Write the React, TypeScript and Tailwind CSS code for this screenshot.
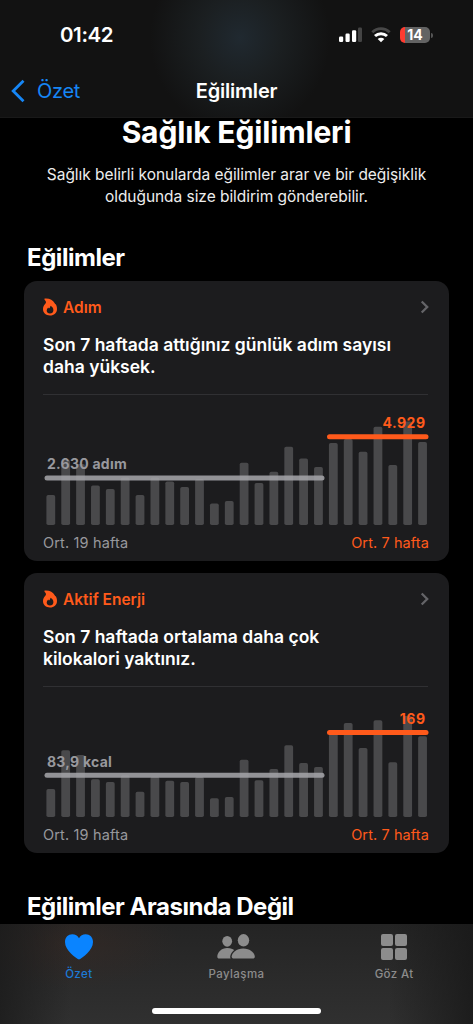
interface Trend {
  title: string;
  lines: string[];
  baseLabel: string;
  baseY: number;
  recentLabel: string;
  recentY: number;
  bars: number[];
}

const trends: Trend[] = [
  {
    title: "Adım",
    lines: ["Son 7 haftada attığınız günlük adım sayısı", "daha yüksek."],
    baseLabel: "2.630 adım",
    baseY: 83,
    recentLabel: "4.929",
    recentY: 41.7,
    bars: [
      30, 65, 61, 39.5, 36, 47.5, 30, 47.5, 43.5, 38, 46, 21.5, 24, 62.3, 42, 53.3, 78.3, 66.5, 58,
      82, 86, 73.3, 98.3, 60, 103.5, 83,
    ],
  },
  {
    title: "Aktif Enerji",
    lines: ["Son 7 haftada ortalama daha çok", "kilokalori yaktınız."],
    baseLabel: "83,9 kcal",
    baseY: 88.2,
    recentLabel: "169",
    recentY: 45.4,
    bars: [
      28, 66.7, 62, 37.7, 35, 41.7, 25.3, 40.3, 36.3, 35, 40, 18.7, 20, 57.3, 36.7, 48, 71.7, 54, 50,
      83.3, 94, 69, 96.7, 54.7, 101, 80.7,
    ],
  },
];

function FlameIcon() {
  return (
    <svg width="14" height="18" viewBox="0 0 14 18" className="shrink-0">
      <path
        fillRule="evenodd"
        fill="#ff5a1b"
        d="M2.2.5C6.4.2 10 1.9 11.7 5.2C12.2 6.2 12.4 6.5 12.6 6.1C13.5 7.5 14 9.3 14 11C14 15 11 17.5 7 17.5S0 15 0 11.3C0 9.2.7 7.6 1.9 6.2C2.5 5.5 3 4.9 3 4.2C3 3.3 2 2.5 1.5 1.6C1.2 1.1 1.5.5 2.2.5ZM7.3 7.8C7.6 9 6.8 9.9 6 10.4C5.6 10.1 5.4 9.8 5.2 9.5C4.2 10.4 3.7 11.4 3.7 12.5C3.7 14.3 5.1 15.5 7 15.5S10.4 14.2 10.4 12.2C10.4 10.2 9.3 8.4 7.3 7.8Z"
      />
    </svg>
  );
}

function TrendChart({ trend }: { trend: Trend }) {
  return (
    <svg width="387" height="130" viewBox="0 0 387 130" className="block">
      {trend.bars.map((height, index) => (
        <rect
          key={index}
          x={3.4 + index * 14.87}
          y={130 - height}
          width="8.8"
          height={height}
          rx="1.8"
          fill="#49494b"
        />
      ))}
      <line x1="4" x2="279" y1={trend.baseY} y2={trend.baseY} stroke="#a5a5aa" strokeOpacity="0.86" strokeWidth="5" strokeLinecap="round" />
      <line x1="286.5" x2="383" y1={trend.recentY} y2={trend.recentY} stroke="#ff5a1b" strokeWidth="5" strokeLinecap="round" />
      <text x="4" y={trend.baseY - 8.7} fill="#98989d" className="text-[14px] font-bold tracking-[0.25px]">
        {trend.baseLabel}
      </text>
      <text x="382.5" y={trend.recentY - 8.5} fill="#ff5a1b" textAnchor="end" className="text-[14px] font-bold tracking-[0.5px]">
        {trend.recentLabel}
      </text>
    </svg>
  );
}

function TrendCard({ trend }: { trend: Trend }) {
  return (
    <article className="h-[280px] rounded-[13px] bg-[#1c1c1e] px-[19px] pt-[15px]">
      <div className="flex h-[22px] items-center">
        <FlameIcon />
        <h3 className="mt-px ml-1.5 text-[15.5px] font-semibold text-[#ff5a1b]">{trend.title}</h3>
        <svg width="9" height="14" viewBox="0 0 9 14" fill="none" className="mr-px mb-px ml-auto">
          <path d="M1.7 1.5L7.2 7L1.7 12.5" stroke="#646468" strokeWidth="2.3" />
        </svg>
      </div>
      <p className="mt-4 text-[17.5px] leading-[22px] font-semibold whitespace-nowrap text-white">
        {trend.lines[0]}
        <br />
        {trend.lines[1]}
      </p>
      <div className="mt-4 h-px w-[385px] bg-[#303033]" />
      <TrendChart trend={trend} />
      <div className="mt-2 flex justify-between pr-px text-[14.5px] leading-5">
        <span className="tracking-[0.15px] text-[#98989d]">Ort. 19 hafta</span>
        <span className="tracking-[0.1px] text-[#ff5a1b]">Ort. 7 hafta</span>
      </div>
    </article>
  );
}

function StatusIcons() {
  return (
    <div className="flex items-center">
      {/* Signal */}
      <svg width="24" height="16" viewBox="0 0 24 16">
        <rect x="1" y="9.5" width="4.2" height="5.5" rx="1.2" fill="#fff" />
        <rect x="7.5" y="6.5" width="4.2" height="8.5" rx="1.2" fill="#fff" />
        <rect x="14" y="3.3" width="4.2" height="11.7" rx="1.2" fill="#fff" />
        <rect x="20" y="0.5" width="4" height="14.5" rx="1.2" fill="#444" />
      </svg>
      {/* Wi-Fi */}
      <svg width="20" height="16" viewBox="0 0 20 16" className="ml-[9px]" fill="none">
        <path d="M1.3 5.2C6.3.4 13.7.4 18.7 5.2" stroke="#484848" strokeWidth="2.8" />
        <path d="M4 9C7.4 5.9 12.6 5.9 16 9" stroke="#fff" strokeWidth="3" />
        <path d="M6.7 12C8.6 10.3 11.4 10.3 13.3 12L10 15.2Z" fill="#fff" />
      </svg>
      {/* Battery */}
      <div className="ml-[9px] flex h-4 w-[30px] items-center justify-center rounded-[5px] bg-linear-to-r from-[#ff3b30] from-[17%] to-[#636363] to-[17%] text-[14px] leading-none font-bold text-white">
        14
      </div>
      <div className="ml-px h-[5px] w-[2px] rounded-r-full bg-[#555]" />
    </div>
  );
}

function PeopleIcon() {
  return (
    <svg width="38" height="26" viewBox="0 0 38 26" fill="#8c8c8c">
      <ellipse cx="10.2" cy="7.3" rx="4.9" ry="5.4" />
      <path d="M15.3 14.9C13.8 14.2 12 13.9 10.2 13.9C4.5 13.9.3 18.3.3 22.5C.3 23.9 1 24.6 2.2 24.6H13.6C13.3 23.8 13.1 23.2 13.2 22.4C13.5 20 15 17.6 17.2 15.9Z" />
      <ellipse cx="26.5" cy="6.3" rx="5.7" ry="6.2" />
      <path d="M26.2 14.4C19.5 14.4 14.7 18.8 14.7 22.5C14.7 24 15.5 24.6 16.8 24.6H35.7C37.1 24.6 37.8 24 37.8 22.5C37.8 18.8 33 14.4 26.2 14.4Z" />
    </svg>
  );
}

export default function App() {
  return (
    <div className="flex h-[1024px] w-[473px] flex-col overflow-hidden bg-black font-['Inter','Liberation_Sans',sans-serif] text-white">
      <header className="h-[118px] shrink-0 border-b border-[#191919] bg-[radial-gradient(ellipse_90px_95px_at_240px_38px,#202930,#1b1f21_45%,#121212)]">
        <div className="flex h-[70px] items-center justify-between pr-[40px] pl-[60px]">
          <span className="mt-px text-[20.5px] font-semibold tracking-[-0.4px]">01:42</span>
          <StatusIcons />
        </div>
        <div className="grid h-[41px] grid-cols-[1fr_auto_1fr] items-center">
          <div className="flex items-center text-[#1686f5]">
            <svg width="14" height="24" viewBox="0 0 14 24" fill="none" className="ml-[11px]">
              <path d="M12.5 1.8L2.2 12L12.5 22.2" stroke="currentColor" strokeWidth="2.8" />
            </svg>
            <span className="ml-3 text-[20px] tracking-[-0.3px]">Özet</span>
          </div>
          <h1 className="text-[20px] font-semibold tracking-[-0.2px]">Eğilimler</h1>
        </div>
      </header>

      <main className="min-h-0 flex-1 px-6">
        <h2 className="text-center text-[30px] leading-7 font-bold tracking-[-0.15px]">Sağlık Eğilimleri</h2>
        <p className="mt-[18px] text-center text-[15.5px] leading-[22px] tracking-[-0.05px] text-[#ededed]">
          Sağlık belirli konularda eğilimler arar ve bir değişiklik
          <br />
          olduğunda size bildirim gönderebilir.
        </p>
        <h2 className="mt-[35px] ml-[3px] text-[24px] leading-[30px] font-bold tracking-[-0.45px]">Eğilimler</h2>
        <div className="mt-2 flex flex-col gap-3">
          {trends.map((trend) => (
            <TrendCard key={trend.title} trend={trend} />
          ))}
        </div>
        <h2 className="mt-[39px] ml-[3px] text-[24px] leading-[30px] font-bold tracking-[-0.48px]">
          Eğilimler Arasında Değil
        </h2>
      </main>

      <footer className="h-[100px] shrink-0 bg-[linear-gradient(90deg,#1b1b1bcc,transparent_15%,transparent_82%,#181818cc),radial-gradient(ellipse_110px_45px_at_70px_20px,#3a2a2480,transparent),linear-gradient(#242424,#303030)]">
        <nav className="grid grid-cols-3 pt-[9px] text-[11.5px] font-medium tracking-[0.4px] text-[#8c8c8c]">
          <div className="flex flex-col items-center text-[#1c7ad6]">
            <svg width="28" height="28" viewBox="0 0 28 28" fill="#0a84ff">
              <path d="M14 26.5C10.5 24.6 0 17.5 0 8.9C0 4.3 3.2 1.2 7.3 1.2C10.3 1.2 12.7 2.7 14 5.2C15.3 2.7 17.7 1.2 20.7 1.2C24.8 1.2 28 4.3 28 8.9C28 17.5 17.5 24.6 14 26.5Z" />
            </svg>
            <span className="mt-[5px]">Özet</span>
          </div>
          <div className="flex flex-col items-center">
            <div className="flex h-7 items-center">
              <PeopleIcon />
            </div>
            <span className="mt-[5px]">Paylaşma</span>
          </div>
          <div className="flex flex-col items-center">
            <div className="grid h-7 grid-cols-2 content-center gap-[2.5px]">
              <div className="h-[11.5px] w-[11.5px] rounded-[2px] bg-[#8c8c8c]" />
              <div className="h-[11.5px] w-[11.5px] rounded-[2px] bg-[#8c8c8c]" />
              <div className="h-[11.5px] w-[11.5px] rounded-[2px] bg-[#8c8c8c]" />
              <div className="h-[11.5px] w-[11.5px] rounded-[2px] bg-[#8c8c8c]" />
            </div>
            <span className="mt-[5px]">Göz At</span>
          </div>
        </nav>
        <div className="mx-auto mt-[25px] h-1.5 w-[169px] rounded-full bg-white" />
      </footer>
    </div>
  );
}
